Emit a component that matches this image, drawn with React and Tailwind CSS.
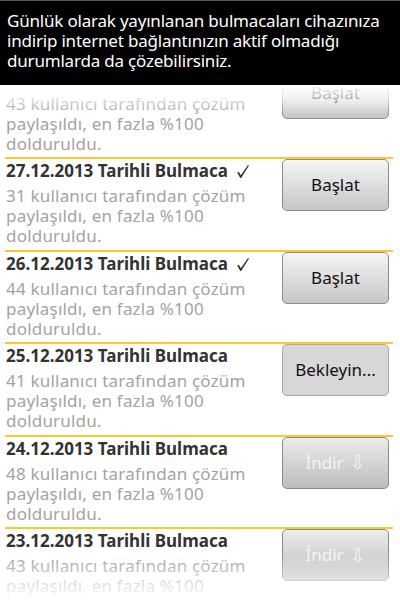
import React from "react";

const items = [
  { date: "28.12.2013", users: 43, check: true, btn: "start" },
  { date: "27.12.2013", users: 31, check: true, btn: "start" },
  { date: "26.12.2013", users: 44, check: true, btn: "start" },
  { date: "25.12.2013", users: 41, check: false, btn: "wait" },
  { date: "24.12.2013", users: 48, check: false, btn: "download" },
  { date: "23.12.2013", users: 43, check: false, btn: "download" },
  { date: "22.12.2013", users: 40, check: false, btn: "download" },
];

function Check() {
  return (
    <svg width="14" height="15" viewBox="0 0 14 15" className="ml-[8px] mt-[1px]">
      <path
        d="M1.2 8.6 L2.8 7.8 L4.8 11.2 L12 1 L13 1.6 L5.2 14 L4.2 14 Z"
        fill="#333"
      />
    </svg>
  );
}

function Btn({ kind }) {
  if (kind === "wait") {
    return (
      <div className="w-[107px] h-[52px] rounded-[5px] border border-[#a9a9a9] bg-[#d7d7d7] flex items-center justify-center text-[17px] text-[#111]">
        Bekleyin...
      </div>
    );
  }
  if (kind === "download") {
    return (
      <div className="w-[107px] h-[52px] rounded-[5px] border border-[#8c8c8c] bg-gradient-to-b from-[#ececec] to-[#bcbcbc] flex items-center justify-center text-[17px] text-[#f4f4f4]">
        <span>İndir</span>
        <span className="ml-[6px] text-[19px]" style={{ fontFamily: '"DejaVu Sans", sans-serif' }}>⇩</span>
      </div>
    );
  }
  return (
    <div className="w-[107px] h-[52px] rounded-[5px] border border-[#8c8c8c] bg-gradient-to-b from-[#f6f6f6] to-[#c6c6c6] flex items-center justify-center text-[17px] text-[#111]">
      Başlat
    </div>
  );
}

export default function App() {
  return (
    <div
      className="w-[400px] h-[600px] bg-white overflow-hidden flex flex-col relative"
      style={{ fontFamily: '"Noto Sans", "DejaVu Sans", sans-serif' }}
    >
      <div className="h-[85px] shrink-0 bg-black border-t border-[#555] px-[7px] pt-[10px] text-white text-[17px] leading-[20px] tracking-[-0.2px]">
        Günlük olarak yayınlanan bulmacaları cihazınıza indirip internet bağlantınızın aktif olmadığı durumlarda da çözebilirsiniz.
      </div>
      <div className="relative flex-1 overflow-hidden">
        <div className="-mt-[20.5px] pl-[5px] pr-[7px]">
          {items.map((it) => (
            <div key={it.date} className="border-t-2 border-[#fcc92c] h-[92.5px] flex pl-[1px] pr-[4px]">
              <div className="flex-1 min-w-0">
                <div className="text-[17px] leading-[24px] font-bold text-[#333] whitespace-nowrap flex items-center">
                  <span>{it.date} Tarihli Bulmaca</span>
                  {it.check && <Check />}
                </div>
                <div className="text-[17px] leading-[20px] text-[#a3a3a3] w-[268px] mt-[3px] tracking-[0.2px]">
                  {it.users} kullanıcı tarafından çözüm paylaşıldı, en fazla %100 dolduruldu.
                </div>
              </div>
              <div className="shrink-0">
                <Btn kind={it.btn} />
              </div>
            </div>
          ))}
        </div>
        <div className="absolute top-0 left-0 right-0 h-[30px] bg-gradient-to-b from-white via-white/60 to-transparent" />
        <div className="absolute bottom-0 left-0 right-0 h-[45px] bg-gradient-to-t from-white via-white/50 to-transparent" />
      </div>
    </div>
  );
}
